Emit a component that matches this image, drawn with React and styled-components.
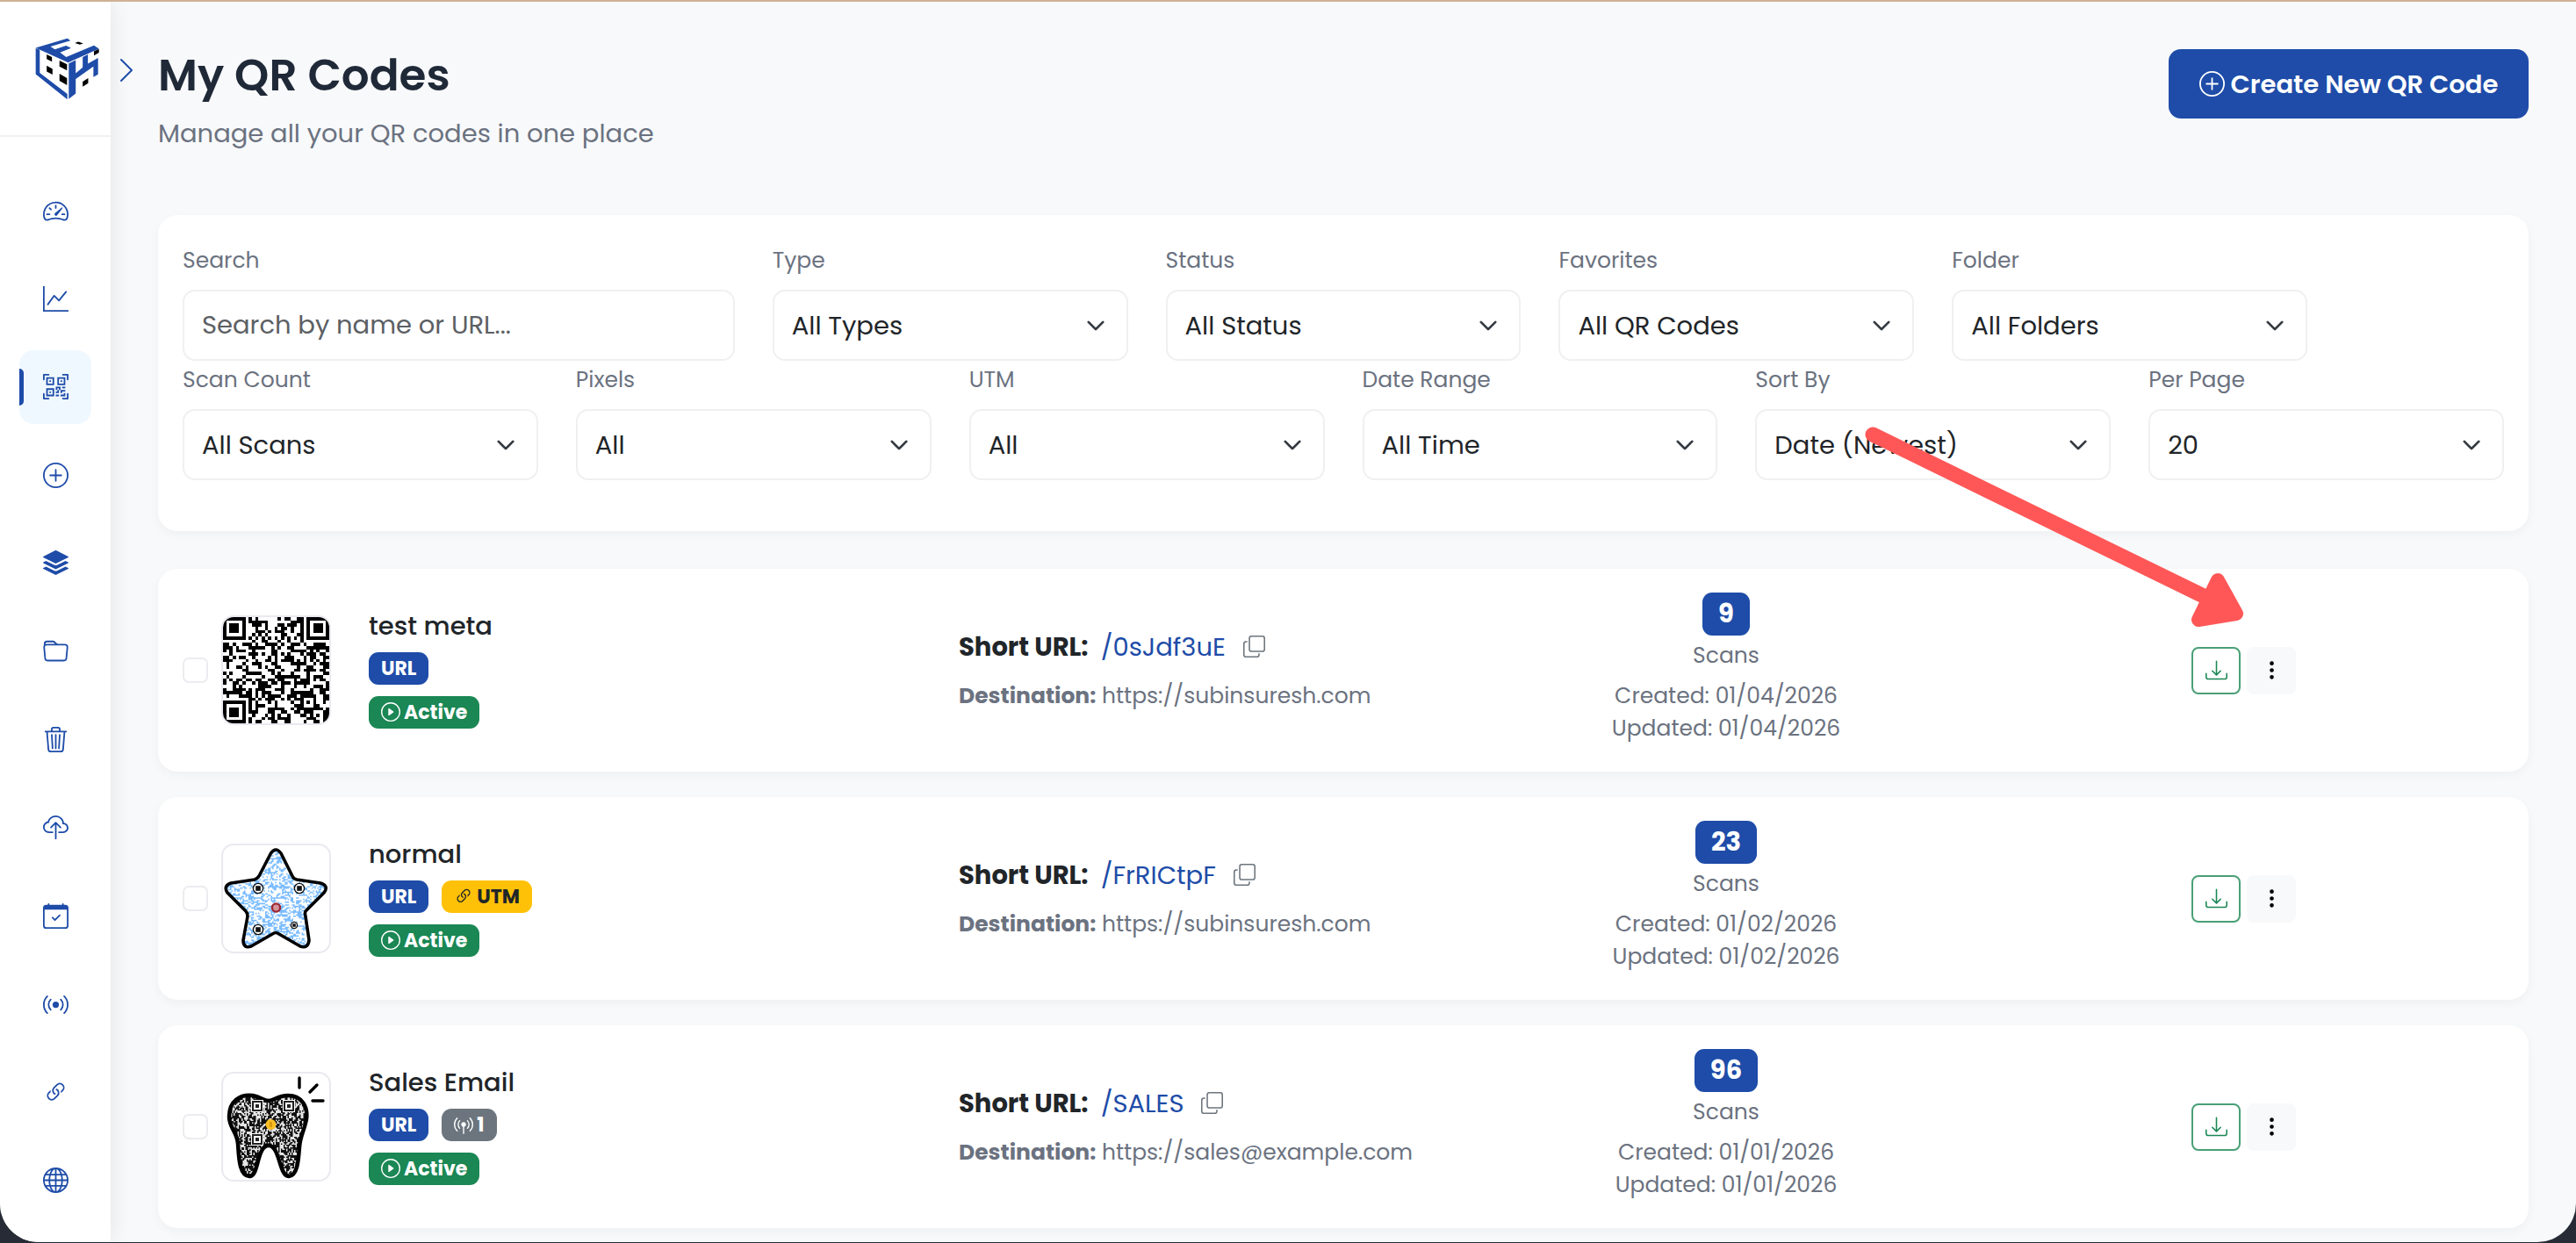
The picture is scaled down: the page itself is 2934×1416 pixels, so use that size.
import React from "react";
import styled, { createGlobalStyle } from "styled-components";
import {
  BsSpeedometer2, BsGraphUp, BsQrCodeScan, BsPlusCircle, BsStack, BsFolder, BsTrash3,
  BsCloudUpload, BsCalendarCheck, BsBroadcast, BsLink45Deg, BsGlobe, BsPlayCircle,
  BsBroadcastPin, BsCopy, BsDownload, BsThreeDotsVertical, BsChevronRight, BsChevronDown,
} from "react-icons/bs";

const BLUE = "#1e4ca8";

const GlobalStyle = createGlobalStyle`
  * { box-sizing: border-box; }
  body {
    margin: 0;
    background: #262b36;
    color: #212529;
    font-family: Poppins, Inter, "Open Sans", sans-serif;
    font-size: 29px;
    line-height: 40px;
  }
  button, input, select { font: inherit; color: inherit; }
  svg { display: block; flex: none; }
`;

const Shell = styled.div`
  position: relative;
  display: flex;
  height: calc(100vh - 1px);
  overflow: hidden;
  background: #f8f9fb;
  border-top: 2px solid #cfb293;
  border-radius: 0 0 44px 44px;
`;

const Sidebar = styled.aside`
  position: relative;
  display: flex;
  flex-direction: column;
  flex: none;
  width: 126px;
  background: #fff;
  box-shadow: 0 0 24px rgba(0, 0, 0, 0.09);
`;

const LogoBox = styled.a`
  display: flex;
  align-items: center;
  height: 154px;
  padding: 0 0 0 40px;
  border-bottom: 2px solid #f1f1f3;
`;

const ExpandButton = styled.button`
  position: absolute;
  top: 62px;
  left: 128px;
  padding: 0;
  border: 0;
  background: none;
  color: ${BLUE};
`;

const Nav = styled.nav`
  display: flex;
  flex: 1;
  flex-direction: column;
  align-items: center;
  justify-content: space-between;
  padding: 42px 0 28px;
`;

const NavLink = styled.a`
  position: relative;
  display: grid;
  place-items: center;
  width: 82px;
  height: 84px;
  border-radius: 16px;
  color: ${BLUE};
  font-size: 29px;
  background: ${(p) => (p.$active ? "#f0f8ff" : "transparent")};

  &::before {
    content: "";
    position: absolute;
    left: 0;
    width: 5px;
    height: 42px;
    border-radius: 0 5px 5px 0;
    background: ${(p) => (p.$active ? BLUE : "transparent")};
  }
`;

const Main = styled.main`
  flex: 1;
  min-width: 0;
  padding: 54px 54px 0;
`;

const Header = styled.header`
  display: flex;
  justify-content: space-between;
  align-items: flex-start;
  height: 189px;
`;

const Title = styled.h1`
  margin: 0;
  font-size: 50px;
  line-height: 60px;
  font-weight: 600;
  color: #1f2937;
`;

const Subtitle = styled.p`
  margin: 16px 0 0;
  font-size: 29px;
  line-height: 40px;
  color: #6b7280;
`;

const CreateButton = styled.button`
  display: flex;
  align-items: center;
  justify-content: center;
  gap: 7px;
  width: 410px;
  height: 79px;
  border: 0;
  border-radius: 14px;
  background: ${BLUE};
  color: #fff;
  font-weight: 600;
  white-space: nowrap;
`;

const Card = styled.section`
  background: #fff;
  border-radius: 22px;
  box-shadow: 0 4px 12px rgba(0, 0, 0, 0.04);
`;

const Filters = styled(Card)`
  display: grid;
  grid-template-columns: repeat(12, 1fr);
  column-gap: 43px;
  padding: 34px 28px 54px;
`;

const Field = styled.div`
  grid-column: span ${(p) => p.$span || 2};
  display: flex;
  flex-direction: column;
  gap: 15px;
  padding-bottom: 4px;
`;

const FieldLabel = styled.label`
  font-size: 25px;
  line-height: 36px;
  color: #6b7280;
`;

const Spacer = styled.div`
  grid-column: span 1;
`;

const SearchInput = styled.input`
  width: 100%;
  height: 81px;
  padding: 0 20px;
  border: 2px solid #f0f0f2;
  border-radius: 14px;
  background: #fff;
  outline: 0;
  &::placeholder { color: #5c6064; opacity: 1; }
`;

const SelectBox = styled.div`
  position: relative;
`;

const Select = styled.select`
  appearance: none;
  width: 100%;
  height: 81px;
  padding: 0 60px 0 20px;
  border: 2px solid #f0f0f2;
  border-radius: 14px;
  background: #fff;
`;

const SelectArrow = styled(BsChevronDown)`
  position: absolute;
  top: 30px;
  right: 26px;
  width: 22px;
  height: 22px;
  color: #343a40;
  stroke: #343a40;
  stroke-width: 1px;
  pointer-events: none;
`;

const List = styled.div`
  display: grid;
  gap: 29px;
  padding-top: 43px;
`;

const Row = styled(Card)`
  display: grid;
  grid-template-columns: 841fr 629fr 404fr 641fr;
  column-gap: 43px;
  align-items: center;
  height: 231px;
  padding: 0 28px;
`;

const Identity = styled.div`
  display: flex;
  align-items: center;
`;

const Check = styled.input`
  appearance: none;
  width: 29px;
  height: 29px;
  margin: 0 15px 0 0;
  border: 2px solid #ebecef;
  border-radius: 7px;
  background: #fff;
`;

const Thumb = styled.div`
  display: grid;
  place-items: center;
  width: 125px;
  height: 125px;
  border: 2px solid #e9eaef;
  border-radius: 14px;
  overflow: hidden;
`;

const Info = styled.div`
  display: grid;
  gap: 13px;
  margin-left: 43px;
  padding-bottom: 2px;
  justify-items: start;
`;

const Name = styled.h2`
  margin: 0;
  font-size: 29px;
  line-height: 34px;
  font-weight: 500;
`;

const Badges = styled.div`
  display: flex;
  gap: 15px;
`;

const badgeColors = {
  blue: [BLUE, "#fff"],
  green: ["#1a8754", "#fff"],
  yellow: ["#ffc107", "#212529"],
  grey: ["#6c757d", "#fff"],
};

const Badge = styled.span`
  display: inline-flex;
  align-items: center;
  gap: 4px;
  height: 37px;
  padding: 0 14px;
  border-radius: 11px;
  background: ${(p) => badgeColors[p.$tone][0]};
  color: ${(p) => badgeColors[p.$tone][1]};
  font-size: 22px;
  line-height: 37px;
  font-weight: 700;
`;

const ShortLine = styled.div`
  display: flex;
  align-items: center;
`;

const ShortLink = styled.a`
  margin: 0 20px 0 14px;
  color: ${BLUE};
  text-decoration: none;
`;

const CopyButton = styled.button`
  padding: 0;
  border: 0;
  background: none;
  color: #6c757d;
`;

const Destination = styled.div`
  margin-top: 17px;
  font-size: 25px;
  line-height: 37px;
  color: #6b7280;
`;

const Stats = styled.div`
  display: flex;
  flex-direction: column;
  align-items: center;
  padding-bottom: 4px;
  font-size: 25px;
  line-height: 37px;
  color: #6b7280;
`;

const Count = styled.span`
  height: 49px;
  margin-bottom: 4px;
  padding: 0 18px;
  border-radius: 11px;
  background: ${BLUE};
  color: #fff;
  font-size: 29px;
  line-height: 49px;
  font-weight: 700;
`;

const Dates = styled.div`
  margin-top: 9px;
  text-align: center;
`;

const Actions = styled.div`
  display: flex;
  justify-content: center;
  gap: 7px;
  padding-left: 48px;
`;

const IconButton = styled.button`
  display: grid;
  place-items: center;
  width: 56px;
  height: 54px;
  padding: 0;
  border: 2px solid ${(p) => (p.$outlined ? "#4a9f76" : "#f8f9fa")};
  border-radius: 8px;
  background: ${(p) => (p.$outlined ? "#fff" : "#f8f9fa")};
  color: ${(p) => (p.$outlined ? "#1a8754" : "#000")};
`;

const Pointer = styled.svg`
  position: absolute;
  top: 478px;
  right: 374px;
  pointer-events: none;
`;

function Logo() {
  return (
    <svg width="73" height="71" viewBox="23 26 221 212" aria-hidden="true">
      <g fill={BLUE}>
        <path d="M25 61 L39 66 L39 146 L134 218 L134 237 L25 150Z" />
        <path d="M25 59 L134 27 L145 34 L76 55 L91 65 L130 52 L147 60 L109 75 L130 91 L226 51 L243 62 L137 110Z" />
        <path d="M139 113 L163 102 L163 147 L187 127 L187 91 L205 82 L205 114 L240 94 L240 151 L224 160 L224 124 L163 167 L163 217 L139 236Z" />
      </g>
      <g fill="#000">
        <path d="M63 82 L81 91 L81 107 L63 98Z" />
        <path d="M107 103 L133 116 L133 137 L107 124Z" />
        <path d="M63 121 L83 132 L83 152 L63 141Z" />
        <path d="M107 149 L133 164 L133 188 L107 173Z" />
        <path d="M226 71 L243 63 L243 76 L226 86Z" />
        <path d="M187 176 L206 164 L206 181 L187 193Z" />
        <path d="M160 43 L172 38 L189 44 L177 48Z" />
      </g>
    </svg>
  );
}

const hash = (x, y, seed) => {
  let h = (x * 374761393 + y * 668265263 + seed * 974634777) | 0;
  h = Math.imul(h ^ (h >>> 13), 1274126177);
  return ((h ^ (h >>> 16)) >>> 0) / 4294967296;
};

const FINDERS = [[0, 0], [26, 0], [0, 26]];

const isDark = (x, y) => {
  for (const [fx, fy] of FINDERS) {
    const dx = x - fx;
    const dy = y - fy;
    if (dx >= -1 && dx <= 7 && dy >= -1 && dy <= 7) {
      const d = Math.max(Math.abs(dx - 3), Math.abs(dy - 3));
      return d === 3 || d <= 1;
    }
  }
  const a = Math.max(Math.abs(x - 26), Math.abs(y - 26));
  if (a <= 2) return a !== 1;
  if (x === 6) return y % 2 === 0;
  if (y === 6) return x % 2 === 0;
  return hash(x, y, 3) < 0.5;
};

const modulesPath = (n, test) => {
  let d = "";
  for (let y = 0; y < n; y++) for (let x = 0; x < n; x++) if (test(x, y)) d += `M${x} ${y}h1v1h-1z`;
  return d;
};

function SquareCode() {
  return (
    <svg width="121" height="121" viewBox="0 0 33 33" shapeRendering="crispEdges" role="img" aria-label="QR code">
      <path d={modulesPath(33, isDark)} />
    </svg>
  );
}

function Eye({ x, y, r }) {
  return (
    <g>
      <circle cx={x} cy={y} r={r} fill="#fff" stroke="#111" strokeWidth="1.4" />
      <rect x={x - r / 2} y={y - r / 2} width={r} height={r} fill="#111" />
    </g>
  );
}

function StarCode() {
  const star = "M54.5 9 Q60 1 66 9 L79 35 Q80 38 84 39 L111 43 Q121 46 115 54 L94 75 Q93 77 94 81 L98 108 Q97 118 88 115 L62 100 Q60 99 58 100 L32 115 Q23 118 23 108 L28 81 Q28 77 26 75 L5 54 Q0 46 9 43 L36 39 Q39 38 41 35Z";
  return (
    <svg width="121" height="121" viewBox="0 0 121 121" role="img" aria-label="Star shaped QR code">
      <clipPath id="star"><path d={star} /></clipPath>
      <g clipPath="url(#star)">
        <path transform="scale(1.6)" fill="#7abcff" d={modulesPath(76, (x, y) => hash(x >> (y % 2), y, 7) < 0.46)} />
      </g>
      <path d={star} fill="none" stroke="#000" strokeWidth="3.6" strokeLinejoin="round" />
      <Eye x={40} y={49} r={5.6} />
      <Eye x={87} y={49} r={5.6} />
      <Eye x={40} y={96} r={5.6} />
      <Eye x={81} y={91} r={3.6} />
      <circle cx="60.5" cy="71" r="4.6" fill="#d4949a" stroke="#9c2733" strokeWidth="2.4" />
    </svg>
  );
}

function ToothCode() {
  const tooth = "M7 49 C7 31 20 23 34 25 C44 27 46 31 52 31 C58 31 62 25 74 25 C90 25 97 38 95 52 C93 64 88 70 87 84 C86 98 85 116 75 117 C64 118 65 82 52 82 C38 82 41 118 30 117 C18 116 18 94 17 80 C16 66 7 62 7 49Z";
  return (
    <svg width="121" height="121" viewBox="0 0 121 121" role="img" aria-label="Tooth shaped QR code">
      <clipPath id="tooth"><path d={tooth} /></clipPath>
      <path d={tooth} fill="#111" />
      <g clipPath="url(#tooth)">
        <path transform="scale(1.5)" fill="#e4e4e4" d={modulesPath(81, (x, y) => hash(x, y >> (x % 2), 11) < 0.42)} />
      </g>
      <path d={tooth} fill="none" stroke="#000" strokeWidth="4.5" />
      {[[39, 37], [75, 37], [39, 75]].map(([x, y]) => (
        <g key={`${x}-${y}`}>
          <rect x={x - 7} y={y - 7} width="14" height="14" fill="#fff" />
          <rect x={x - 5} y={y - 5} width="10" height="10" fill="none" stroke="#222" strokeWidth="2" />
          <rect x={x - 2} y={y - 2} width="4" height="4" fill="#222" />
        </g>
      ))}
      <circle cx="54.5" cy="58" r="6" fill="#fbbf24" />
      <path d="M54.5 55v6" stroke="#d99a10" strokeWidth="3" />
      <g stroke="#000" strokeWidth="3.4" strokeLinecap="round">
        <path d="M87 5v11M99 21l8-8M102 31h12" />
      </g>
    </svg>
  );
}

const navItems = [
  ["Dashboard", BsSpeedometer2], ["Analytics", BsGraphUp], ["QR codes", BsQrCodeScan],
  ["Create", BsPlusCircle], ["Bulk", BsStack], ["Folders", BsFolder], ["Trash", BsTrash3],
  ["Upload", BsCloudUpload], ["Schedule", BsCalendarCheck], ["Pixels", BsBroadcast],
  ["Links", BsLink45Deg], ["Domains", BsGlobe],
];

const firstFilters = [
  ["type", "Type", "All Types"], ["status", "Status", "All Status"],
  ["favorites", "Favorites", "All QR Codes"], ["folder", "Folder", "All Folders"],
];

const secondFilters = [
  ["scans", "Scan Count", "All Scans"], ["pixels", "Pixels", "All"], ["utm", "UTM", "All"],
  ["range", "Date Range", "All Time"], ["sort", "Sort By", "Date (Newest)"], ["per", "Per Page", "20"],
];

const codes = [
  { name: "test meta", art: SquareCode, slug: "/0sJdf3uE", target: "https://subinsuresh.com", scans: 9, date: "01/04/2026" },
  { name: "normal", art: StarCode, utm: true, slug: "/FrRICtpF", target: "https://subinsuresh.com", scans: 23, date: "01/02/2026" },
  { name: "Sales Email", art: ToothCode, pixels: 1, slug: "/SALES", target: "https://sales@example.com", scans: 96, date: "01/01/2026" },
];

function FilterSelect({ id, label, value }) {
  return (
    <Field>
      <FieldLabel htmlFor={id}>{label}</FieldLabel>
      <SelectBox>
        <Select id={id}><option>{value}</option></Select>
        <SelectArrow />
      </SelectBox>
    </Field>
  );
}

function CodeRow({ code }) {
  const Art = code.art;
  return (
    <Row as="article">
      <Identity>
        <Check type="checkbox" aria-label={`Select ${code.name}`} />
        <Thumb><Art /></Thumb>
        <Info>
          <Name>{code.name}</Name>
          <Badges>
            <Badge $tone="blue">URL</Badge>
            {code.utm && <Badge $tone="yellow"><BsLink45Deg size={22} />UTM</Badge>}
            {code.pixels && <Badge $tone="grey"><BsBroadcastPin size={22} />{code.pixels}</Badge>}
          </Badges>
          <Badge $tone="green"><BsPlayCircle size={22} />Active</Badge>
        </Info>
      </Identity>
      <div>
        <ShortLine>
          <strong>Short URL:</strong>
          <ShortLink href="#">{code.slug}</ShortLink>
          <CopyButton aria-label="Copy short URL"><BsCopy size={25} /></CopyButton>
        </ShortLine>
        <Destination><strong>Destination:</strong> {code.target}</Destination>
      </div>
      <Stats>
        <Count>{code.scans}</Count>
        <span>Scans</span>
        <Dates>
          <div>Created: {code.date}</div>
          <div>Updated: {code.date}</div>
        </Dates>
      </Stats>
      <Actions>
        <IconButton $outlined aria-label="Download"><BsDownload size={25} /></IconButton>
        <IconButton aria-label="More actions"><BsThreeDotsVertical size={25} /></IconButton>
      </Actions>
    </Row>
  );
}

export default function App() {
  return (
    <>
      <GlobalStyle />
      <Shell>
        <Sidebar>
          <LogoBox href="#" aria-label="Home"><Logo /></LogoBox>
          <ExpandButton aria-label="Expand sidebar"><BsChevronRight size={32} /></ExpandButton>
          <Nav>
            {navItems.map(([label, Icon]) => (
              <NavLink key={label} href="#" aria-label={label} $active={label === "QR codes"}><Icon /></NavLink>
            ))}
          </Nav>
        </Sidebar>
        <Main>
          <Header>
            <div>
              <Title>My QR Codes</Title>
              <Subtitle>Manage all your QR codes in one place</Subtitle>
            </div>
            <CreateButton><BsPlusCircle size={29} />Create New QR Code</CreateButton>
          </Header>
          <Filters>
            <Field $span={3}>
              <FieldLabel htmlFor="search">Search</FieldLabel>
              <SearchInput id="search" placeholder="Search by name or URL..." />
            </Field>
            {firstFilters.map(([id, label, value]) => <FilterSelect key={id} id={id} label={label} value={value} />)}
            <Spacer />
            {secondFilters.map(([id, label, value]) => <FilterSelect key={id} id={id} label={label} value={value} />)}
          </Filters>
          <List>
            {codes.map((code) => <CodeRow key={code.name} code={code} />)}
          </List>
        </Main>
        <Pointer width="440" height="240" viewBox="2120 480 440 240" aria-hidden="true">
          <path d="M2133 495 L2516 682" stroke="#ff5757" strokeWidth="17" strokeLinecap="round" />
          <path d="M2526 661 L2547 699 L2504 706Z" fill="#ff5757" stroke="#ff5757" strokeWidth="16" strokeLinejoin="round" />
        </Pointer>
      </Shell>
    </>
  );
}
